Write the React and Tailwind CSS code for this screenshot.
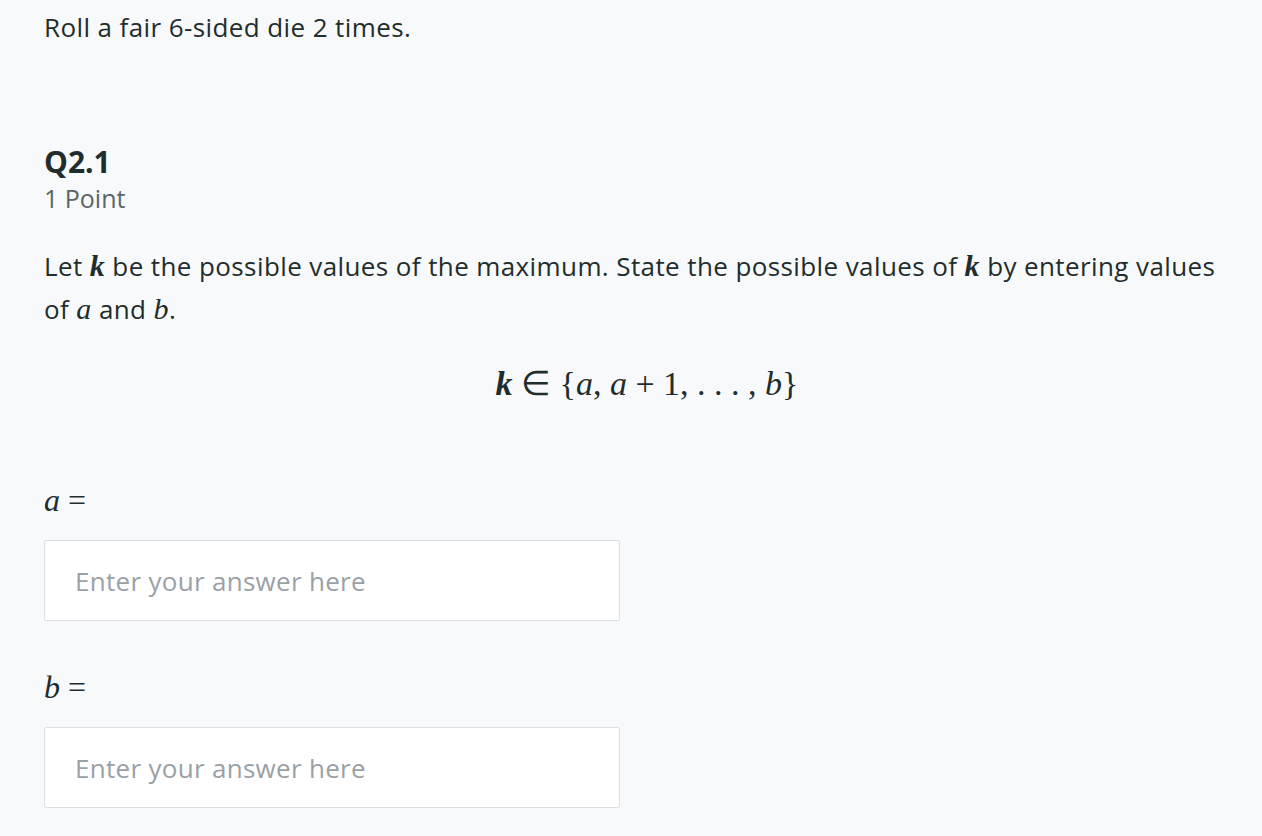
export default function App() {
  const mi = "font-['Liberation_Serif',serif] italic leading-none";
  return (
    <div className="min-h-[836px] w-full bg-[#f8f9fb] pl-[44px] pr-[12px] text-[#1f2d2d] font-['Open_Sans',sans-serif]">
      <p className="pt-[10px] text-[26px] leading-[34px] tracking-[0.4px]">Roll a fair 6-sided die 2 times.</p>

      <div className="mt-[100px]">
        <h2 className="text-[30px] font-bold leading-[36px]">Q2.1</h2>
        <div className="mt-[2px] text-[25px] leading-[32px] text-[#5b6669]">1 Point</div>
      </div>

      <p className="mt-[31px] max-w-[1196px] text-[26px] leading-[43px] tracking-[0.4px]">
        Let <span className={`${mi} text-[30px] font-bold`}>k</span> be the possible values of the maximum. State the possible values of{' '}
        <span className={`${mi} text-[30px] font-bold`}>k</span> by entering values of <span className={`${mi} text-[30px]`}>a</span> and{' '}
        <span className={`${mi} text-[30px]`}>b</span>.
      </p>

      <div className="mt-[33px] flex justify-center text-[34px] leading-[40px] font-['Liberation_Serif',serif]">
        <span>
          <span className="italic font-bold">k</span> ∈ {'{'}
          <span className="italic">a</span>, <span className="italic">a</span> + 1, . . . , <span className="italic">b</span>
          {'}'}
        </span>
      </div>

      <div className="mt-[78px] text-[32px] leading-[36px] font-['Liberation_Serif',serif]">
        <span className="italic">a</span> =
      </div>
      <input
        placeholder="Enter your answer here"
        className="mt-[22px] block h-[81px] w-[576px] rounded-[2px] border border-[#dde1e5] bg-white px-[30px] text-[26px] tracking-[0.3px] text-[#1f2d2d] placeholder:text-[#9aa1a6] focus:outline-none"
      />

      <div className="mt-[48px] text-[32px] leading-[36px] font-['Liberation_Serif',serif]">
        <span className="italic">b</span> =
      </div>
      <input
        placeholder="Enter your answer here"
        className="mt-[22px] block h-[81px] w-[576px] rounded-[2px] border border-[#dde1e5] bg-white px-[30px] text-[26px] tracking-[0.3px] text-[#1f2d2d] placeholder:text-[#9aa1a6] focus:outline-none"
      />
    </div>
  );
}
